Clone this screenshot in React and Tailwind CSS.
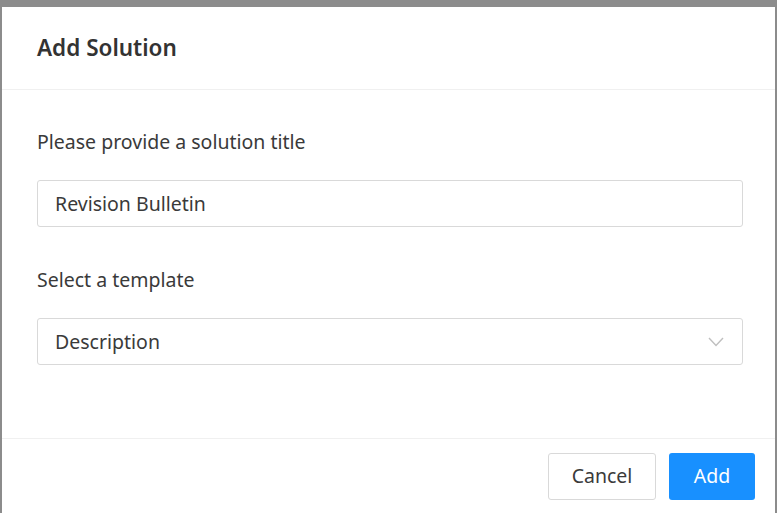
import React from 'react';

const font = { fontFamily: "'Noto Sans', 'Open Sans', sans-serif" };

export default function App() {
  return (
    <div className="h-[513px] w-[777px] overflow-hidden bg-[#8c8c8c] px-[2px] pt-[7px]" style={font}>
      <div className="flex h-full flex-col bg-white">
        {/* Header */}
        <div className="flex h-[83px] items-center border-b border-[#f0f0f0] px-[35px]">
          <h2 className="text-[22.5px] font-semibold text-[#333333]">Add Solution</h2>
        </div>

        {/* Body */}
        <div className="flex-1 pl-[35px] pr-[32px] pt-[39px]">
          <label className="block text-[19.5px] leading-[26px] text-[#3a3a3a]">Please provide a solution title</label>
          <div className="mt-[25px] flex h-[47px] items-center rounded-[3px] border border-[#d9d9d9] px-[17px] text-[19.5px] text-[#3a3a3a]">
            Revision Bulletin
          </div>

          <label className="mt-[40px] block text-[19.5px] leading-[26px] text-[#3a3a3a]">Select a template</label>
          <div className="mt-[25px] flex h-[47px] items-center justify-between rounded-[3px] border border-[#d9d9d9] pl-[17px] pr-[18px] text-[19.5px] text-[#3a3a3a]">
            <span>Description</span>
            <svg width="16" height="10" viewBox="0 0 16 10" fill="none" stroke="#bfbfbf" strokeWidth="1.4">
              <polyline points="1,1 8,8.5 15,1" />
            </svg>
          </div>
        </div>

        {/* Footer */}
        <div className="flex h-[75px] items-center justify-end gap-[13px] border-t border-[#f0f0f0] pr-[20px]">
          <button className="h-[47px] w-[108px] rounded-[3px] border border-[#d9d9d9] bg-white text-[19.5px] text-[#3a3a3a]">
            Cancel
          </button>
          <button className="h-[47px] w-[86px] rounded-[3px] bg-[#1890ff] text-[19.5px] text-white">
            Add
          </button>
        </div>
      </div>
    </div>
  );
}
